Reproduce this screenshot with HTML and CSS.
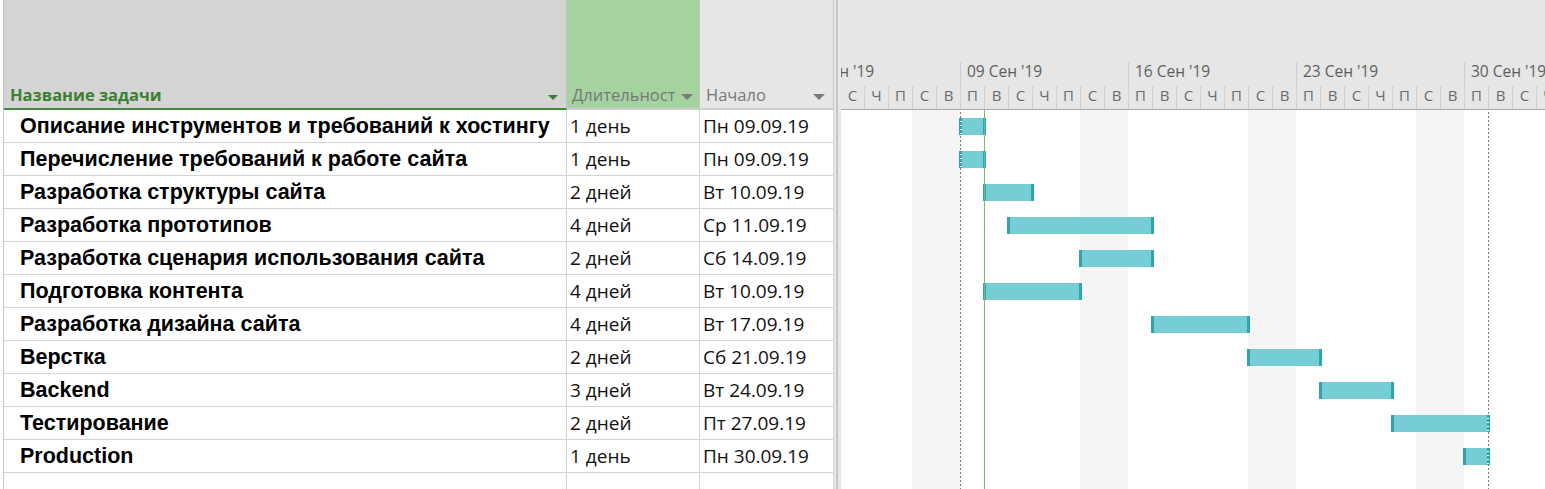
FILE: index.html
```html
<!DOCTYPE html>
<html lang="ru">
<head>
<meta charset="utf-8">
<title>Диаграмма Ганта</title>
<link rel="stylesheet" href="styles.css">
</head>
<body>
<div class="app">
  <div class="sheet">
    <div class="grid head">
      <div class="th th-name"><span class="th-label">Название задачи</span><i class="caret caret-green"></i></div>
      <div class="th th-dur"><span class="th-label clip">Длительность</span><i class="caret"></i></div>
      <div class="th th-start"><span class="th-label">Начало</span><i class="caret"></i></div>
    </div>
    <div class="grid row"><div class="td name">Описание инструментов и требований к хостингу</div><div class="td val">1 день</div><div class="td val">Пн 09.09.19</div></div>
    <div class="grid row"><div class="td name">Перечисление требований к работе сайта</div><div class="td val">1 день</div><div class="td val">Пн 09.09.19</div></div>
    <div class="grid row"><div class="td name">Разработка структуры сайта</div><div class="td val">2 дней</div><div class="td val">Вт 10.09.19</div></div>
    <div class="grid row"><div class="td name">Разработка прототипов</div><div class="td val">4 дней</div><div class="td val">Ср 11.09.19</div></div>
    <div class="grid row"><div class="td name">Разработка сценария использования сайта</div><div class="td val">2 дней</div><div class="td val">Сб 14.09.19</div></div>
    <div class="grid row"><div class="td name">Подготовка контента</div><div class="td val">4 дней</div><div class="td val">Вт 10.09.19</div></div>
    <div class="grid row"><div class="td name">Разработка дизайна сайта</div><div class="td val">4 дней</div><div class="td val">Вт 17.09.19</div></div>
    <div class="grid row"><div class="td name">Верстка</div><div class="td val">2 дней</div><div class="td val">Сб 21.09.19</div></div>
    <div class="grid row"><div class="td name">Backend</div><div class="td val">3 дней</div><div class="td val">Вт 24.09.19</div></div>
    <div class="grid row"><div class="td name">Тестирование</div><div class="td val">2 дней</div><div class="td val">Пт 27.09.19</div></div>
    <div class="grid row"><div class="td name">Production</div><div class="td val">1 день</div><div class="td val">Пн 30.09.19</div></div>
    <div class="grid row"><div class="td name"></div><div class="td val"></div><div class="td val"></div></div>
  </div>

  <div class="split"><div class="split-bar"></div></div>

  <div class="gantt">
    <div class="gh">
      <div class="tier-top">
        <div class="wk">02 Сен '19</div>
        <div class="wk">09 Сен '19</div>
        <div class="wk">16 Сен '19</div>
        <div class="wk">23 Сен '19</div>
        <div class="wk">30 Сен '19</div>
      </div>
      <div class="tier-bot">
        <div class="dy">С</div><div class="dy">Ч</div><div class="dy">П</div><div class="dy">С</div><div class="dy">В</div>
        <div class="dy">П</div><div class="dy">В</div><div class="dy">С</div><div class="dy">Ч</div><div class="dy">П</div><div class="dy">С</div><div class="dy">В</div>
        <div class="dy">П</div><div class="dy">В</div><div class="dy">С</div><div class="dy">Ч</div><div class="dy">П</div><div class="dy">С</div><div class="dy">В</div>
        <div class="dy">П</div><div class="dy">В</div><div class="dy">С</div><div class="dy">Ч</div><div class="dy">П</div><div class="dy">С</div><div class="dy">В</div>
        <div class="dy">П</div><div class="dy">В</div><div class="dy">С</div><div class="dy">Ч</div><div class="dy">П</div>
      </div>
    </div>
    <div class="chart">
      <div class="shade" style="left:71px"></div>
      <div class="shade" style="left:239px"></div>
      <div class="shade" style="left:407px"></div>
      <div class="shade" style="left:575px"></div>
      <div class="dotline" style="left:119px"></div>
      <div class="dotline" style="left:647px"></div>
      <div class="today" style="left:143px"></div>
      <div class="grow"><div class="bar dash-l" style="left:118px;width:27px"></div></div>
      <div class="grow"><div class="bar dash-l" style="left:118px;width:27px"></div></div>
      <div class="grow"><div class="bar" style="left:142px;width:51px"></div></div>
      <div class="grow"><div class="bar" style="left:166px;width:147px"></div></div>
      <div class="grow"><div class="bar" style="left:238px;width:75px"></div></div>
      <div class="grow"><div class="bar" style="left:142px;width:99px"></div></div>
      <div class="grow"><div class="bar" style="left:310px;width:99px"></div></div>
      <div class="grow"><div class="bar" style="left:406px;width:75px"></div></div>
      <div class="grow"><div class="bar" style="left:478px;width:75px"></div></div>
      <div class="grow"><div class="bar dash-r" style="left:550px;width:99px"></div></div>
      <div class="grow"><div class="bar dash-r" style="left:622px;width:27px"></div></div>
    </div>
  </div>
</div>
</body>
</html>
```

FILE: styles.css
```css
* { box-sizing: border-box; margin: 0; padding: 0; }
html, body { width: 1545px; height: 489px; overflow: hidden; background: #ffffff; }
body { padding-left: 3px; font-family: "Open Sans", "Noto Sans", sans-serif; }

.app { display: flex; height: 489px; }

/* ---------- sheet ---------- */
.sheet { flex: none; width: 831px; border-left: 1px solid #c8c8c8; }
.grid { display: grid; grid-template-columns: 563px 133px 134px; }

.head { height: 110px; }
.th {
  display: flex; align-items: flex-end; justify-content: space-between;
  padding: 0 8px 1px 6px;
  border-right: 1px solid #c4c4c4;
  border-bottom: 2px solid #cfcfcf;
  overflow: hidden;
}
.th-name { background: #d4d4d4; border-bottom-color: #3e8a3a; }
.th-dur { background: #a4d3a0; padding-left: 5px; padding-right: 6px; }
.th-start { background: #e6e6e6; padding-left: 6px; }
.th-label { font-size: 16.5px; line-height: 24px; color: #777777; white-space: nowrap; }
.th-name .th-label { font-weight: 700; font-size: 16.5px; color: #3c7f30; }
.clip { overflow: hidden; width: 103px; flex: none; }
.caret {
  flex: none; width: 0; height: 0; margin-bottom: 7px;
  border-left: 6px solid transparent; border-right: 6px solid transparent;
  border-top: 6px solid #7a7a7a;
}
.caret-green { border-top-color: #3a7d2c; border-left-width: 5px; border-right-width: 5px; border-top-width: 5px; }

.row { height: 33px; }
.td {
  display: flex; align-items: center;
  border-right: 1px solid #d4d4d4; border-bottom: 1px solid #d4d4d4;
  white-space: nowrap; overflow: hidden;
}
.name { padding-left: 16px; font-family: "Liberation Sans", Arial, sans-serif; font-weight: 700; font-size: 21.5px; color: #000; }
.val { padding-left: 3px; font-size: 19px; color: #111; }

/* ---------- splitter ---------- */
.split { flex: none; width: 7px; background: #e8e8e8; display: flex; justify-content: center; }
.split-bar { width: 2px; background: #c6c6c6; margin-left: -1px; }

/* ---------- gantt ---------- */
.gantt { flex: 1; position: relative; overflow: hidden; }
.gh {
  height: 110px; background: #e6e6e6; border-bottom: 1px solid #a9a9a9;
  display: flex; flex-direction: column; justify-content: flex-end;
}
.tier-top { display: flex; height: 24px; margin-left: -49px; }
.wk {
  flex: none; width: 168px; border-left: 1px solid #cdcdcd;
  padding-left: 6px; font-size: 15.5px; line-height: 19px; color: #5e5e5e; white-space: nowrap;
}
.tier-bot { display: flex; height: 23px; margin-left: -1px; }
.dy {
  flex: none; width: 24px; border-left: 1px solid #d0d0d0;
  text-align: center; font-size: 15px; line-height: 18px; color: #6b6b6b;
}
.dy:first-child { border-left-color: transparent; }

.chart { position: relative; height: 379px; }
.shade { position: absolute; top: 0; bottom: 0; width: 48px; background: #f5f5f5; }
.dotline {
  position: absolute; top: 2px; bottom: 0; width: 1px;
  background: repeating-linear-gradient(to bottom, #7c7c7c 0 2px, transparent 2px 4px);
}
.today { position: absolute; top: 0; bottom: 0; width: 1px; background: #74bf70; z-index: 2; }

.grow { position: relative; height: 33px; }
.bar {
  position: absolute; top: 8px; height: 17px;
  background: #76cdd5;
  border-left: 3px solid #2ea5ac; border-right: 3px solid #2ea5ac;
  z-index: 1;
}
.dash-l { border-left: 1px solid #2ea5ac; }
.dash-l::before {
  content: ""; position: absolute; left: 0; top: 0; bottom: 0; width: 2px;
  background: repeating-linear-gradient(to bottom, #2ea5ac 0 3px, #ffffff 3px 4px);
}
.dash-r { border-right: 1px solid #2ea5ac; }
.dash-r::after {
  content: ""; position: absolute; right: 0; top: 0; bottom: 0; width: 2px;
  background: repeating-linear-gradient(to bottom, #2ea5ac 0 3px, #ffffff 3px 4px);
}
```
